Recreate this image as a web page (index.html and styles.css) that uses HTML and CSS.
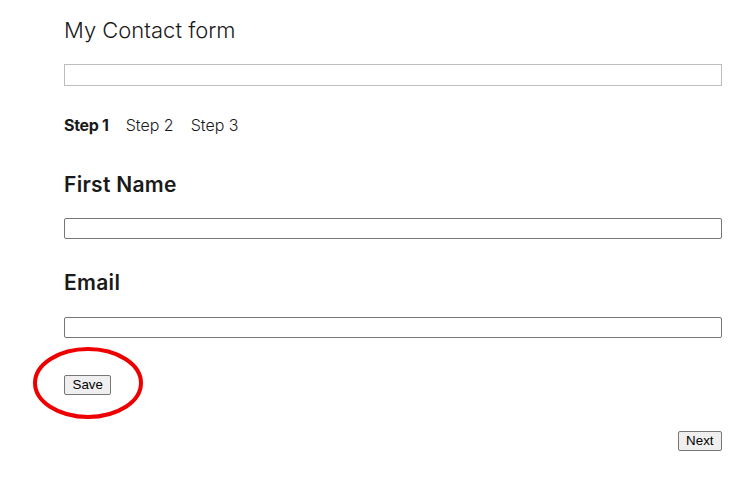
FILE: index.html
```html
<!DOCTYPE html>
<html>
<head>
<meta charset="utf-8">
<link rel="stylesheet" href="styles.css">
</head>
<body>
<div class="page">
  <h1 class="title">My Contact form</h1>
  <div class="progress"></div>
  <nav class="steps">
    <span class="step active">Step 1</span>
    <span class="step">Step 2</span>
    <span class="step">Step 3</span>
  </nav>
  <div class="field">
    <label class="label">First Name</label>
    <input class="input" type="text">
  </div>
  <div class="field">
    <label class="label">Email</label>
    <input class="input" type="text">
  </div>
  <div class="save-wrap">
    <button class="btn">Save</button>
    <svg class="circle" width="116" height="78" viewBox="0 0 116 78"><ellipse cx="58" cy="39" rx="53" ry="34" fill="none" stroke="#ee0000" stroke-width="4"/></svg>
  </div>
  <div class="nav">
    <button class="btn">Next</button>
  </div>
</div>
</body>
</html>
```

FILE: styles.css
```css
html, body { margin: 0; background: #fff; }
body { font-family: Inter, "Noto Sans", sans-serif; color: #1a1a1a; }
.page { padding: 17px 30px 0 64px; display: flex; flex-direction: column; }
.title { margin: 0; font-size: 22px; font-weight: 300; line-height: 26px; letter-spacing: 0; }
.progress { margin-top: 21px; border: 1px solid #bdbdbd; box-sizing: border-box; height: 22px; }
.steps { margin-top: 28px; display: flex; gap: 17px; font-size: 16px; font-weight: 300; line-height: 22px; letter-spacing: 0; }
.step.active { font-weight: 700; letter-spacing: -0.3px; }
.field { display: flex; flex-direction: column; }
.label { margin-top: 36px; font-size: 21px; font-weight: 600; line-height: 26px; letter-spacing: 0.3px; }
.field + .field .label { margin-top: 31px; }
.input { margin-top: 20px; height: 21px; box-sizing: border-box; border: 1px solid #767676; border-radius: 2px; padding: 0; }
.field + .field .input { margin-top: 21px; }
.save-wrap { position: relative; margin-top: 35px; align-self: flex-start; }
.btn { font-family: Arial, "Liberation Sans", sans-serif; font-size: 13.33px; height: 20px; padding: 1px 7.5px; background: #efefef; border: 1px solid #767676; border-radius: 2px; color: #000; }
.circle { position: absolute; left: -34px; top: -29px; pointer-events: none; }
.nav { display: flex; justify-content: flex-end; margin-top: 36px; }
```
